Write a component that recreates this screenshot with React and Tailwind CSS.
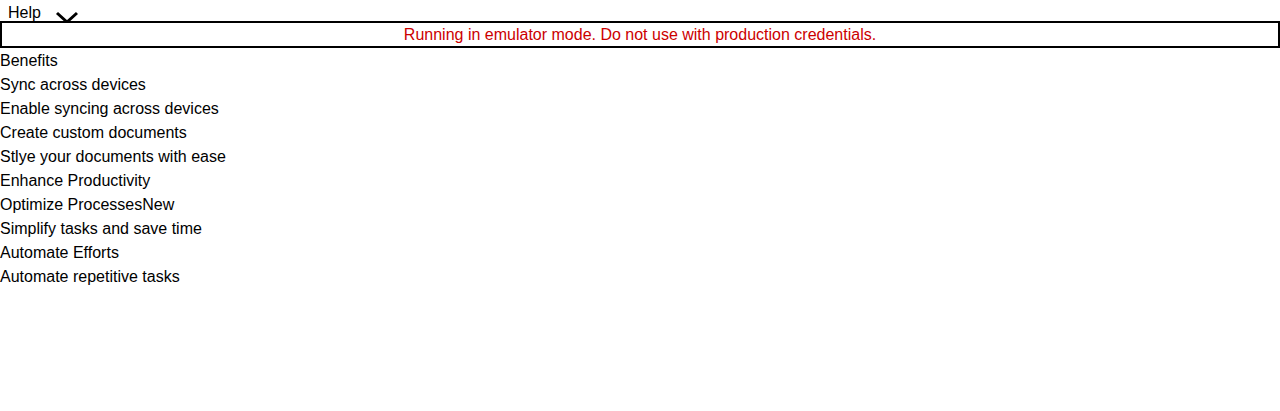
export default function App() {
  const items = [
    "Benefits",
    "Sync across devices",
    "Enable syncing across devices",
    "Create custom documents",
    "Stlye your documents with ease",
    "Enhance Productivity",
    "Optimize ProcessesNew",
    "Simplify tasks and save time",
    "Automate Efforts",
    "Automate repetitive tasks",
  ];
  return (
    <div className="min-h-[411px] bg-white text-black text-[16px] leading-6" style={{ fontFamily: '"Liberation Sans", Arial, sans-serif' }}>
      <div className="flex h-[21px] items-start">
        <span className="pl-2 pt-px leading-6">Help</span>
        <svg className="ml-[13px] mt-0 shrink-0 overflow-visible" width="26" height="24" viewBox="0 0 26 24">
          <polyline points="3,13 13,22 23,13" fill="none" stroke="black" strokeWidth="3" />
        </svg>
      </div>
      <div className="relative border-2 border-black bg-white h-[27px] text-center text-[#cc0000] leading-[23px]">
        Running in emulator mode. Do not use with production credentials.
      </div>
      <div className="pt-px">
        {items.map((t) => (
          <div key={t}>{t}</div>
        ))}
      </div>
    </div>
  );
}
